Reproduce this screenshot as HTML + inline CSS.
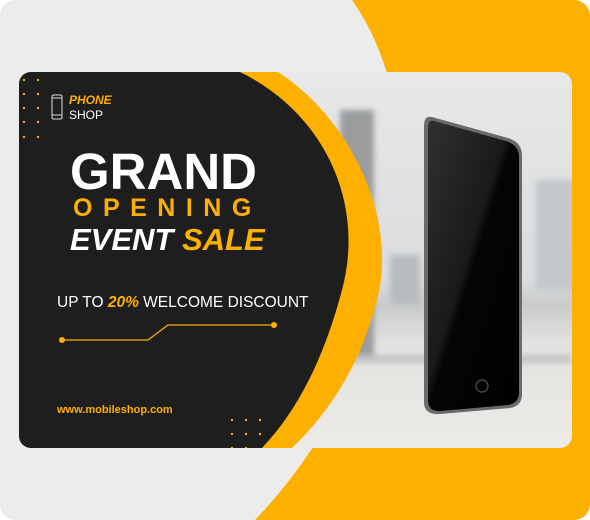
<!DOCTYPE html>
<html><head><style>
html,body{margin:0;padding:0;width:590px;height:520px;overflow:hidden;background:#fff;font-family:"Liberation Sans",sans-serif}
.t{position:absolute;white-space:nowrap}
</style></head><body>
<svg width="590" height="520" style="position:absolute;left:0;top:0">
<defs>
<clipPath id="c"><rect x="19" y="72" width="553" height="376" rx="12"/></clipPath>
<clipPath id="o"><rect x="0" y="0" width="590" height="520" rx="16"/></clipPath>
<linearGradient id="bg" x1="0" y1="0" x2="0" y2="1">
<stop offset="0" stop-color="#e6e8ea"/><stop offset="0.55" stop-color="#dadcdd"/><stop offset="0.62" stop-color="#c9cbcb"/><stop offset="0.72" stop-color="#e2e2e0"/><stop offset="1" stop-color="#ecebe8"/></linearGradient>
<linearGradient id="ph" x1="0" y1="0" x2="1" y2="1"><stop offset="0" stop-color="#303030"/><stop offset="0.45" stop-color="#1a1a1a"/><stop offset="0.5" stop-color="#050505"/><stop offset="1" stop-color="#000"/></linearGradient>
<filter id="bl"><feGaussianBlur stdDeviation="3"/></filter>
</defs>
<g clip-path="url(#o)">
<rect width="590" height="520" fill="#ececec"/>
<path d="M352 0 L590 0 L590 520 L255 520 C 390 380, 450 140, 352 0 Z" fill="#feb000"/>
</g>
<g clip-path="url(#c)">
<rect x="19" y="72" width="553" height="376" fill="url(#bg)"/>
<g filter="url(#bl)">
<rect x="340" y="110" width="34" height="250" fill="#9a9c9e"/>
<rect x="390" y="255" width="30" height="50" fill="#b8bcc0"/>
<rect x="536" y="180" width="40" height="110" fill="#c4c7ca"/>
<rect x="19" y="355" width="553" height="8" fill="#c4c4c2"/>
</g>
<path d="M19 72 L278 72 C 352 120, 398 220, 377 300 C 362 360, 332 410, 292 448 L19 448 Z" fill="#feb000"/>
<path d="M19 72 L240 72 C 322 112, 366 200, 342 290 C 324 358, 298 410, 262 448 L19 448 Z" fill="#1e1e1e"/>
<path d="M432 117 L508 138 Q522 142 522 156 L522 394 Q522 406 510 408 L440 414 Q424 415 424 402 L424 126 Q424 115 432 117 Z" fill="#6a6a6a"/>
<path d="M434 121 L506 141 Q519 145 519 157 L519 392 Q519 403 508 405 L441 411 Q428 412 428 400 L428 128 Q428 119 434 121 Z" fill="url(#ph)"/>
<circle cx="482" cy="386" r="6" fill="none" stroke="#555" stroke-width="1.2"/>
<circle cx="232" cy="420" r="1.2" fill="#feb000"/><circle cx="246" cy="420" r="1.2" fill="#feb000"/><circle cx="260" cy="420" r="1.2" fill="#feb000"/>
<circle cx="232" cy="434" r="1.2" fill="#feb000"/><circle cx="246" cy="434" r="1.2" fill="#feb000"/><circle cx="260" cy="434" r="1.2" fill="#feb000"/>
<circle cx="232" cy="448" r="1.2" fill="#feb000"/><circle cx="246" cy="448" r="1.2" fill="#feb000"/>
</g>
<g fill="#feb000">
<circle cx="24" cy="80" r="1.2"/><circle cx="38" cy="80" r="1.2"/>
<circle cx="24" cy="94" r="1.2"/><circle cx="38" cy="94" r="1.2"/>
<circle cx="24" cy="108" r="1.2"/><circle cx="38" cy="108" r="1.2"/>
<circle cx="24" cy="122" r="1.2"/><circle cx="38" cy="122" r="1.2"/>
<circle cx="24" cy="137" r="1.2"/><circle cx="38" cy="137" r="1.2"/>
</g>
<rect x="52" y="95" width="10" height="24" rx="1.5" fill="none" stroke="#ddd" stroke-width="1"/>
<line x1="52" y1="98" x2="62" y2="98" stroke="#ddd"/><line x1="52" y1="115" x2="62" y2="115" stroke="#ddd"/>
<path d="M62 340 L148 340 L168 325 L274 325" fill="none" stroke="#feb000" stroke-width="1.2"/>
<circle cx="62" cy="340" r="3" fill="#feb000"/><circle cx="274" cy="325" r="3" fill="#feb000"/>
</svg>
<div class="t" style="left:69px;top:93px;font-size:12px;font-weight:bold;font-style:italic;color:#feb000">PHONE</div>
<div class="t" style="left:69px;top:108px;font-size:12px;color:#fff">SHOP</div>
<div class="t" style="left:70px;top:142px;font-size:51px;font-weight:bold;color:#fff">GRAND</div>
<div class="t" style="left:73px;top:194px;font-size:25px;font-weight:bold;color:#feb000;letter-spacing:10.5px">OPENING</div>
<div class="t" style="left:70px;top:222px;font-size:31px;font-weight:bold;font-style:italic;color:#fff">EVENT <span style="color:#feb000">SALE</span></div>
<div class="t" style="left:57px;top:294px;font-size:15.5px;color:#fff">UP TO <b style="font-style:italic;color:#feb000">20%</b> WELCOME DISCOUNT</div>
<div class="t" style="left:57px;top:404px;font-size:11px;font-weight:bold;color:#feb000">www.mobileshop.com</div>
</body></html>
